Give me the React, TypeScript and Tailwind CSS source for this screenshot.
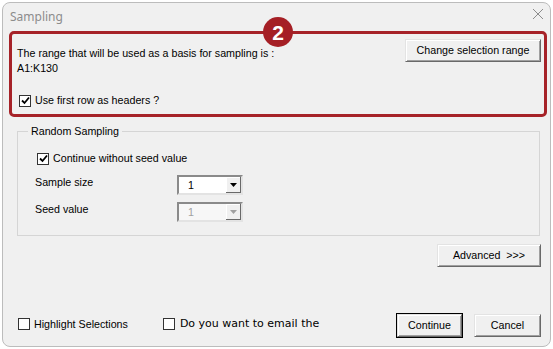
const body = "font-['Liberation_Sans',Arial,sans-serif] text-[10.7px] text-black";

function Check({ checked }: { checked?: boolean }) {
  return (
    <span className="w-[12px] h-[12px] border border-[#333] bg-white flex items-center justify-center shrink-0">
      {checked && (
        <svg width="9" height="9" viewBox="0 0 9 9">
          <path d="M1 4.5 L3.5 7 L8 1.5" fill="none" stroke="#000" strokeWidth="1.8" />
        </svg>
      )}
    </span>
  );
}

function Btn({ label, w, primary }: { label: string; w: string; primary?: boolean }) {
  return (
    <button
      className={`${w} h-[23px] bg-[#f0f0f0] border border-t-[#e3e3e3] border-l-[#e3e3e3] border-r-[#696969] border-b-[#696969] shadow-[inset_1px_1px_0_#fff,inset_-1px_-1px_0_#a0a0a0] flex items-center justify-center whitespace-pre ${primary ? "outline outline-1 outline-black" : ""}`}
    >
      {label}
    </button>
  );
}

function Combo({ disabled }: { disabled?: boolean }) {
  return (
    <div className={`w-[66px] h-[20px] border-2 border-t-[#8a8a8a] border-l-[#8a8a8a] border-r-[#e3e3e3] border-b-[#e3e3e3] flex ${disabled ? "bg-[#f7f7f7]" : "bg-white"}`}>
      <span className={`flex-1 pl-[9px] leading-[16px] ${disabled ? "text-[#a0a0a0]" : ""}`}>1</span>
      <span className="w-[15px] h-[16px] bg-[#f0f0f0] border-r border-b border-[#696969] shadow-[inset_1px_1px_0_#fff] flex items-center justify-center">
        <svg width="7" height="4" viewBox="0 0 7 4">
          <path d="M0 0 H7 L3.5 4 Z" fill={disabled ? "#a0a0a0" : "#000"} />
        </svg>
      </span>
    </div>
  );
}

export default function App() {
  return (
    <div className={`w-[553px] h-[349px] bg-white p-[2px] ${body}`}>
      <div className="h-full rounded-lg border border-[#bcbcbc] bg-[#f0f0f0] flex flex-col overflow-hidden">
        {/* title bar */}
        <div className="h-[28px] flex items-center justify-between pl-[7px] pr-[7px]">
          <span className="font-['Noto_Sans',sans-serif] text-[12px] text-[#8c8c8c] mt-[-1px]">Sampling</span>
          <svg width="10" height="10" viewBox="0 0 10 10" className="mt-[-6px]">
            <path d="M0 0 L10 10 M10 0 L0 10" stroke="#8c8c8c" strokeWidth="1" />
          </svg>
        </div>

        {/* highlighted range section */}
        <div className="relative ml-[6px] mr-[3px] h-[86px] border-[3px] border-[#a62228] rounded-[5px] flex justify-between">
          <div className="absolute left-[251px] top-[-17px] w-[30px] h-[30px] rounded-full bg-[#a51f25] flex items-center justify-center">
            <span className="font-['Liberation_Sans',Arial,sans-serif] font-bold text-[21px] text-white leading-none">2</span>
          </div>
          <div className="pl-[5px] pt-[12px] leading-[15px]">
            <div>The range that will be used as a basis for sampling is :</div>
            <div>A1:K130</div>
            <label className="flex items-center gap-[4px] mt-[17px] ml-[2px]">
              <Check checked />
              <span>Use first row as headers ?</span>
            </label>
          </div>
          <div className="mt-[5px] mr-[3px]">
            <Btn label="Change selection range" w="w-[136px]" />
          </div>
        </div>

        {/* random sampling group */}
        <fieldset className="ml-[14px] mr-[10px] mt-[7px] border border-[#d5d5d5] pb-[13px] leading-[15px]">
          <legend className="ml-[10px] px-[3px]">Random Sampling</legend>
          <div className="pl-[17px]">
            <label className="flex items-center gap-[4px] mt-[12px] ml-[2px]">
              <Check checked />
              <span>Continue without seed value</span>
            </label>
            <div className="flex mt-[9px]">
              <span className="w-[142px]">Sample size</span>
              <Combo />
            </div>
            <div className="flex mt-[7px]">
              <span className="w-[142px]">Seed value</span>
              <Combo disabled />
            </div>
          </div>
        </fieldset>

        <div className="flex justify-end mt-[8px] mr-[9px]">
          <Btn label="Advanced  >>>" w="w-[104px]" />
        </div>

        <div className="flex-1" />

        <div className="flex items-center pl-[15px] pr-[9px] pb-[9px]">
          <label className="flex items-center gap-[4px] mt-[-3px]">
            <Check />
            <span>Highlight Selections</span>
          </label>
          <label className="flex items-center gap-[5px] ml-[35px] mt-[-3px]">
            <Check />
            <span className="font-['DejaVu_Sans',sans-serif] text-[11px]">Do you want to email the</span>
          </label>
          <div className="ml-auto flex gap-[12px]">
            <Btn label="Continue" w="w-[65px]" primary />
            <Btn label="Cancel" w="w-[67px]" />
          </div>
        </div>
      </div>
    </div>
  );
}
